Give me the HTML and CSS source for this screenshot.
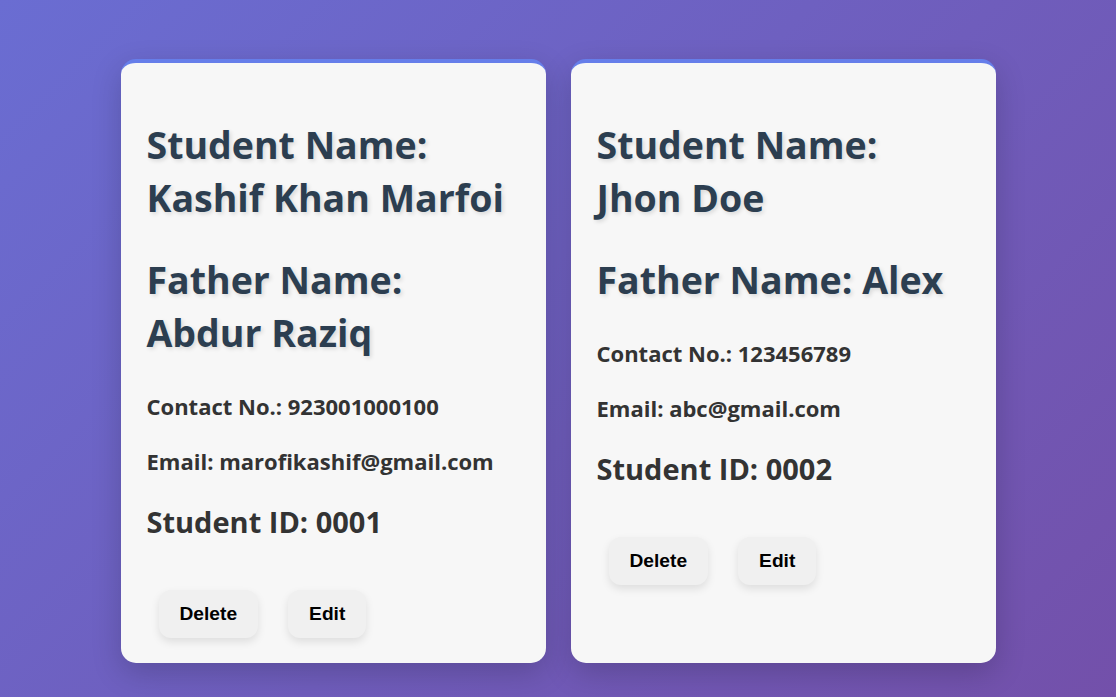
FILE: index.html
```html
<!DOCTYPE html>
<html lang="en">
<head>
<meta charset="utf-8">
<title>Students</title>
<link rel="stylesheet" href="styles.css">
</head>
<body>
<main class="list">
  <section class="card">
    <h2 class="name">Student Name: Kashif Khan Marfoi</h2>
    <h2 class="name father">Father Name: Abdur Raziq</h2>
    <p class="info">Contact No.: 923001000100</p>
    <p class="info">Email: marofikashif@gmail.com</p>
    <h3 class="sid">Student ID: 0001</h3>
    <div class="actions">
      <button class="btn">Delete</button>
      <button class="btn">Edit</button>
    </div>
  </section>
  <section class="card">
    <h2 class="name">Student Name: Jhon Doe</h2>
    <h2 class="name father">Father Name: Alex</h2>
    <p class="info">Contact No.: 123456789</p>
    <p class="info">Email: abc@gmail.com</p>
    <h3 class="sid">Student ID: 0002</h3>
    <div class="actions">
      <button class="btn">Delete</button>
      <button class="btn">Edit</button>
    </div>
  </section>
</main>
</body>
</html>
```
FILE: styles.css
```css
html, body {
  margin: 0;
  padding: 0;
}
body {
  min-height: 697px;
  background: linear-gradient(135deg, #6a6dd2 0%, #7350aa 100%);
  font-family: "Open Sans", Lato, sans-serif;
}
.list {
  display: flex;
  justify-content: center;
  align-items: stretch;
  gap: 25px;
  padding-top: 59px;
}
.card {
  box-sizing: border-box;
  width: 425px;
  background: #f7f7f7;
  border-top: 4px solid #667eea;
  border-radius: 15px;
  padding: 25px 35px 25px 26px;
  box-shadow: 0 10px 30px rgba(0, 0, 0, 0.18);
}
.name {
  margin: 30px 0 0;
  font-size: 37.5px;
  line-height: 53px;
  font-weight: 700;
  color: #2c3e50;
  text-shadow: 2px 2px 4px rgba(0, 0, 0, 0.12);
}
.name.father {
  margin-top: 29px;
}
.info {
  margin: 28px 0 0;
  font-size: 22px;
  line-height: 27px;
  font-weight: 700;
  color: #333;
}
.father + .info {
  margin-top: 34px;
}
.sid {
  margin: 28px 0 0;
  font-size: 29px;
  line-height: 37px;
  font-weight: 700;
  color: #333;
}
.actions {
  display: flex;
  gap: 30px;
  margin: 50px 0 0 12px;
}
.btn {
  font-family: "Liberation Sans", Arial, sans-serif;
  font-size: 19.2px;
  font-weight: 700;
  line-height: 22px;
  color: #000;
  background: #f0f0f0;
  border: none;
  border-radius: 12px;
  padding: 13px 21px;
  box-shadow: 0 4px 8px rgba(0, 0, 0, 0.1);
}
```
